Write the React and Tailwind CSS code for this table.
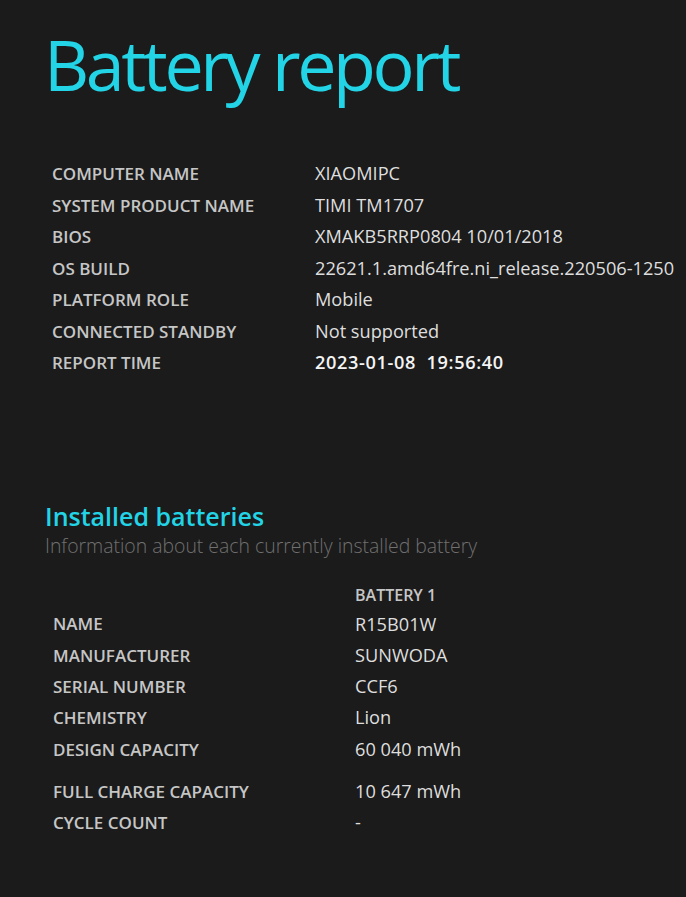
const info = [
  ["COMPUTER NAME", "XIAOMIPC"],
  ["SYSTEM PRODUCT NAME", "TIMI TM1707"],
  ["BIOS", "XMAKB5RRP0804 10/01/2018"],
  ["OS BUILD", "22621.1.amd64fre.ni_release.220506-1250"],
  ["PLATFORM ROLE", "Mobile"],
  ["CONNECTED STANDBY", "Not supported"],
];

const battery = [
  ["NAME", "R15B01W"],
  ["MANUFACTURER", "SUNWODA"],
  ["SERIAL NUMBER", "CCF6"],
  ["CHEMISTRY", "Lion"],
  ["DESIGN CAPACITY", "60 040 mWh"],
];

const Label = ({ children }) => (
  <span className="text-[17px] font-semibold text-[#c6c6c6]">{children}</span>
);

const Value = ({ children, strong }) => (
  <span
    className={`text-[18.2px] ${strong ? "font-semibold text-[#f4f4f4] tracking-[0.6px]" : "font-normal text-[#dedede]"}`}
  >
    {children}
  </span>
);

export default function App() {
  return (
    <div
      className="w-[686px] h-[897px] bg-[#1b1b1b] overflow-hidden"
      style={{ fontFamily: '"Open Sans", "Noto Sans", sans-serif' }}
    >
      {/* titel */}
      <h1 className="pl-[44px] pt-[14px] text-[70px] font-normal leading-[100px] text-[#22d4e6] tracking-[-3.4px]">
        Battery report
      </h1>

      {/* info komputer */}
      <div className="mt-[44px] pl-[52px] flex flex-col">
        {info.map(([k, v]) => (
          <div key={k} className="flex items-center h-[31.5px]">
            <div className="w-[263px]">
              <Label>{k}</Label>
            </div>
            <Value>{v}</Value>
          </div>
        ))}
        <div className="flex items-center h-[31.5px]">
          <div className="w-[263px]">
            <Label>REPORT TIME</Label>
          </div>
          <Value strong>
            2023-01-08&nbsp;&nbsp;19:56:40
          </Value>
        </div>
      </div>

      {/* baterai */}
      <div className="mt-[122px] pl-[45px]">
        <h2 className="text-[25px] font-semibold leading-[30px] text-[#22d4e6]">Installed batteries</h2>
        <p className="text-[19.4px] font-light leading-[30px] text-[#707070]">
          Information about each currently installed battery
        </p>
      </div>

      <div className="mt-[20px] pl-[53px] flex flex-col">
        <div className="flex items-center h-[28px]">
          <div className="w-[302px]" />
          <span className="text-[16px] font-semibold text-[#c6c6c6]">BATTERY 1</span>
        </div>
        {battery.map(([k, v]) => (
          <div key={k} className="flex items-center h-[31.3px]">
            <div className="w-[302px]">
              <Label>{k}</Label>
            </div>
            <Value>{v}</Value>
          </div>
        ))}
        <div className="flex items-center h-[31.3px] mt-[11px]">
          <div className="w-[302px]">
            <Label>FULL CHARGE CAPACITY</Label>
          </div>
          <Value>10 647 mWh</Value>
        </div>
        <div className="flex items-center h-[31.3px]">
          <div className="w-[302px]">
            <Label>CYCLE COUNT</Label>
          </div>
          <Value>-</Value>
        </div>
      </div>
    </div>
  );
}
